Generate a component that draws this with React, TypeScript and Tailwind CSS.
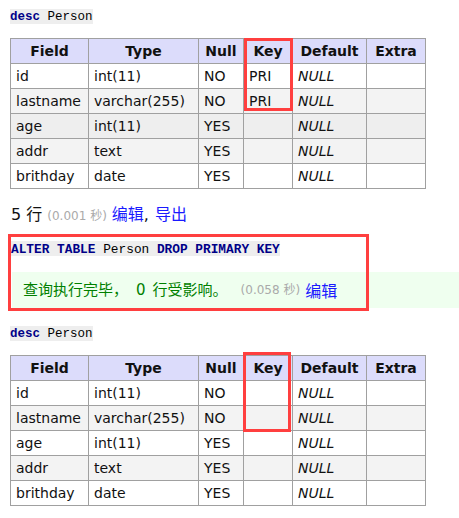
import React from 'react';

interface Column {
  field: string;
  type: string;
  nullable: string;
  key: string;
}

const firstRows: Column[] = [
  { field: 'id', type: 'int(11)', nullable: 'NO', key: 'PRI' },
  { field: 'lastname', type: 'varchar(255)', nullable: 'NO', key: 'PRI' },
  { field: 'age', type: 'int(11)', nullable: 'YES', key: '' },
  { field: 'addr', type: 'text', nullable: 'YES', key: '' },
  { field: 'brithday', type: 'date', nullable: 'YES', key: '' },
];

const secondRows: Column[] = firstRows.map((r) => ({ ...r, key: '' }));

const headers = ['Field', 'Type', 'Null', 'Key', 'Default', 'Extra'];
const widths = ['w-[78px]', 'w-[110px]', 'w-[45px]', 'w-[49px]', 'w-[74px]', 'w-[59px]'];

const SqlLine: React.FC<{ children: React.ReactNode; wide?: boolean }> = ({ children, wide }) => (
  <div
    className={`h-[15px] font-['Liberation_Mono',monospace] ${wide ? 'text-[12.8px]' : 'text-[12.5px]'}`}
  >
    <span className="bg-[#eeeeee] inline-block h-[15px] pt-[2px] leading-[13px]">{children}</span>
  </div>
);

const Kw: React.FC<{ children: React.ReactNode }> = ({ children }) => (
  <span className="font-bold text-[#000088]">{children}</span>
);

const DescTable: React.FC<{ rows: Column[]; hoverRow?: number }> = ({ rows, hoverRow }) => (
  <table className="table-fixed border-collapse w-[416px] text-[14px] text-[#111] font-['DejaVu_Sans',sans-serif]">
    <colgroup>
      {widths.map((w, i) => (
        <col key={i} className={w} />
      ))}
    </colgroup>
    <thead>
      <tr className="bg-[#dcdcfb]">
        {headers.map((h) => (
          <th key={h} className="h-[25px] p-0 border border-[#a0a0a0] font-bold text-center">
            {h}
          </th>
        ))}
      </tr>
    </thead>
    <tbody>
      {rows.map((row, i) => {
        const bg = i === hoverRow ? 'bg-[#eeeeee]' : i % 2 === 1 ? 'bg-[#f3f3f3]' : 'bg-white';
        return (
          <tr key={row.field} className={bg}>
            <td className="h-[25px] p-0 pl-[5px] border border-[#a0a0a0] whitespace-nowrap">{row.field}</td>
            <td className="h-[25px] p-0 pl-[5px] border border-[#a0a0a0] whitespace-nowrap">{row.type}</td>
            <td className="h-[25px] p-0 pl-[5px] border border-[#a0a0a0]">{row.nullable}</td>
            <td className="h-[25px] p-0 pl-[5px] border border-[#a0a0a0]">{row.key}</td>
            <td className="h-[25px] p-0 pl-[5px] border border-[#a0a0a0] italic">NULL</td>
            <td className="h-[25px] p-0 pl-[5px] border border-[#a0a0a0]"></td>
          </tr>
        );
      })}
    </tbody>
  </table>
);

export default function App() {
  return (
    <div className="relative w-[459px] h-[518px] bg-white pl-[10px] pt-[8px] overflow-hidden">
      <SqlLine>
        <Kw>desc</Kw> Person
      </SqlLine>

      <div className="mt-[15px]">
        <DescTable rows={firstRows} hoverRow={2} />
      </div>

      <div className="mt-[16px] h-[20px] leading-[20px] pl-[1px] flex items-baseline font-['DejaVu_Sans','Noto_Sans_CJK_SC',sans-serif]">
        <span className="text-[16px] text-[#111]">5 行</span>
        <span className="ml-[5px] text-[12px] text-[#aaaaaa]">(0.001 秒)</span>
        <span className="ml-[5px] text-[16px] text-[#1a1aff]">编辑</span>
        <span className="text-[16px] text-[#111]">,</span>
        <span className="ml-[6px] text-[16px] text-[#1a1aff]">导出</span>
      </div>

      <div className="mt-[15px] pl-[1px]">
        <SqlLine wide>
          <Kw>ALTER TABLE</Kw> Person <Kw>DROP PRIMARY KEY</Kw>
        </SqlLine>
      </div>

      <div className="mt-[17px] ml-[2px] h-[36px] bg-[#efffef] pl-[11px] flex items-center font-['Noto_Sans_CJK_SC',sans-serif]">
        <span className="text-[15px] text-[#008000] whitespace-nowrap">
          查询执行完毕，<span className="ml-[8px] mr-[7px] font-['DejaVu_Sans',sans-serif]">0</span>行受影响。
        </span>
        <span className="ml-[13px] text-[12px] text-[#aaaaaa] font-['DejaVu_Sans','Noto_Sans_CJK_SC',sans-serif]">
          (0.058 秒)
        </span>
        <span className="ml-[5px] text-[16px] text-[#1a1aff]">编辑</span>
      </div>

      <div className="mt-[17px]">
        <SqlLine>
          <Kw>desc</Kw> Person
        </SqlLine>
      </div>

      <div className="mt-[15px]">
        <DescTable rows={secondRows} />
      </div>

      {/* red annotation boxes */}
      <div className="absolute left-[244px] top-[38px] w-[49px] h-[73px] border-[3px] border-[#ff3f3f]" />
      <div className="absolute left-[8px] top-[234px] w-[361px] h-[77px] border-[3px] border-[#ff3f3f]" />
      <div className="absolute left-[243px] top-[352px] w-[48px] h-[80px] border-[3px] border-[#ff3f3f]" />
    </div>
  );
}
